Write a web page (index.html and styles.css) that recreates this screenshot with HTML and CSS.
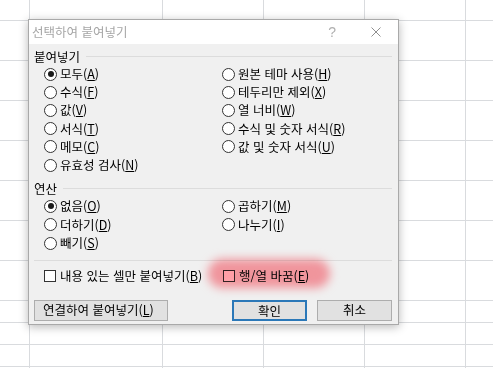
FILE: index.html
```html
<!DOCTYPE html>
<html lang="ko">
<head>
    <meta charset="UTF-8">
    <title>선택하여 붙여넣기</title>
    <link rel="stylesheet" href="styles.css">
</head>
<body>
    <div class="sheet">
        <div></div><div></div><div></div><div></div><div></div><div></div>
        <div></div><div></div><div></div><div></div><div></div><div></div>
        <div></div><div></div><div></div><div></div><div></div><div></div>
        <div></div><div></div><div></div><div></div><div></div><div></div>
        <div></div><div></div><div></div><div></div><div></div><div></div>
        <div></div><div></div><div></div><div></div><div></div><div></div>
        <div></div><div></div><div></div><div></div><div></div><div></div>
        <div></div><div></div><div></div><div></div><div></div><div></div>
        <div></div><div></div><div></div><div></div><div></div><div></div>
        <div></div><div></div><div></div><div></div><div></div><div></div>
        <div></div><div></div><div></div><div></div><div></div><div></div>
        <div></div><div></div><div></div><div></div><div></div><div></div>
    </div>

    <div class="dialog">
        <div class="titlebar">
            <span class="title">선택하여 붙여넣기</span>
            <span class="help">?</span>
            <svg class="close" viewBox="0 0 10 10"><path d="M0.5 0.5L9.5 9.5M9.5 0.5L0.5 9.5" stroke="#8f8f8f" stroke-width="1" fill="none"/></svg>
        </div>
        <div class="content">
            <div class="legend">붙여넣기</div>
            <div class="options paste">
                <label class="radio checked"><span class="dot"></span>모두(<u>A</u>)</label>
                <label class="radio"><span class="dot"></span>수식(<u>F</u>)</label>
                <label class="radio"><span class="dot"></span>값(<u>V</u>)</label>
                <label class="radio"><span class="dot"></span>서식(<u>T</u>)</label>
                <label class="radio"><span class="dot"></span>메모(<u>C</u>)</label>
                <label class="radio"><span class="dot"></span>유효성 검사(<u>N</u>)</label>
                <label class="radio"><span class="dot"></span>원본 테마 사용(<u>H</u>)</label>
                <label class="radio"><span class="dot"></span>테두리만 제외(<u>X</u>)</label>
                <label class="radio"><span class="dot"></span>열 너비(<u>W</u>)</label>
                <label class="radio"><span class="dot"></span>수식 및 숫자 서식(<u>R</u>)</label>
                <label class="radio"><span class="dot"></span>값 및 숫자 서식(<u>U</u>)</label>
            </div>

            <div class="legend">연산</div>
            <div class="options ops">
                <label class="radio checked"><span class="dot"></span>없음(<u>O</u>)</label>
                <label class="radio"><span class="dot"></span>더하기(<u>D</u>)</label>
                <label class="radio"><span class="dot"></span>빼기(<u>S</u>)</label>
                <label class="radio"><span class="dot"></span>곱하기(<u>M</u>)</label>
                <label class="radio"><span class="dot"></span>나누기(<u>I</u>)</label>
            </div>

            <div class="rule"></div>

            <div class="checks">
                <label class="check"><span class="box"></span>내용 있는 셀만 붙여넣기(<u>B</u>)</label>
                <label class="check"><span class="box"></span>행/열 바꿈(<u>E</u>)</label>
            </div>

            <div class="buttons">
                <button class="btn link">연결하여 붙여넣기(<u>L</u>)</button>
                <div class="actions">
                    <button class="btn default">확인</button>
                    <button class="btn">취소</button>
                </div>
            </div>
        </div>
        <div class="mark"></div>
    </div>
</body>
</html>
```

FILE: styles.css
```css
html, body {
    margin: 0;
    padding: 0;
    height: 100%;
    overflow: hidden;
    font-family: "Noto Sans CJK KR", "Malgun Gothic", sans-serif;
}
body {
    position: relative;
    background: #fff;
}

/* spreadsheet behind the dialog */
.sheet {
    display: grid;
    grid-template-columns: 29px 132px 100px 100px 100px 1fr;
    grid-template-rows: 20px repeat(7, 39px) repeat(3, 21px) 1fr;
    gap: 1px;
    height: 368px;
    background: #d9dbde;
}
.sheet div {
    background: #fff;
}

/* dialog */
.dialog {
    position: absolute;
    left: 28px;
    top: 19px;
    width: 371px;
    height: 306px;
    box-sizing: border-box;
    border: 1px solid #a9a9a9;
    background: #f0f0f0;
    box-shadow: 0 2px 9px rgba(0,0,0,0.28);
    display: flex;
    flex-direction: column;
}
.titlebar {
    height: 24px;
    background: #fff;
    display: flex;
    align-items: center;
    padding: 0 17px 0 3px;
    flex-shrink: 0;
}
.title {
    font-size: 12.5px;
    color: #a6a6a6;
    line-height: 24px;
}
.help {
    margin-left: auto;
    font-size: 14px;
    color: #b0b0b0;
    font-family: "Liberation Sans", sans-serif;
    margin-right: 35px;
    line-height: 24px;
}
.close {
    width: 10px;
    height: 10px;
}

.content {
    flex: 1;
    padding: 4px 6px 0 5px;
    font-size: 12.5px;
    color: #000;
}
.legend {
    display: flex;
    align-items: center;
    height: 17px;
    line-height: 17px;
}
.legend::after {
    content: "";
    flex: 1;
    height: 1px;
    background: #dcdcdc;
    margin-left: 6px;
}
.options {
    display: grid;
    grid-template-columns: 178px 1fr;
    grid-auto-flow: column;
    padding-left: 10px;
}
.paste {
    grid-template-rows: repeat(6, 18.2px);
}
.paste + .legend {
    margin-top: 6px;
}
.ops {
    grid-template-rows: repeat(3, 18.5px);
    margin-bottom: 7px;
}

.radio, .check {
    display: flex;
    align-items: center;
    white-space: nowrap;
    line-height: 18px;
}
.dot {
    width: 11px;
    height: 11px;
    border: 1px solid #333;
    border-radius: 50%;
    background: #fff;
    margin-right: 3px;
    position: relative;
    flex-shrink: 0;
}
.checked .dot::after {
    content: "";
    position: absolute;
    left: 2.5px;
    top: 2.5px;
    width: 6px;
    height: 6px;
    border-radius: 50%;
    background: #1a1a1a;
}
.rule {
    height: 1px;
    background: #dcdcdc;
}
.checks {
    display: grid;
    grid-template-columns: 179px 1fr;
    padding-left: 10px;
    margin-top: 6px;
    height: 18px;
}
.box {
    width: 10px;
    height: 10px;
    border: 1px solid #333;
    background: #fff;
    margin-right: 4px;
    flex-shrink: 0;
}

.buttons {
    display: flex;
    justify-content: space-between;
    margin-top: 15px;
}
.actions {
    display: flex;
    gap: 10px;
}
.btn {
    height: 21px;
    box-sizing: border-box;
    border: 1px solid #adadad;
    background: #e1e1e1;
    font-family: inherit;
    font-size: 12.5px;
    color: #000;
    padding: 0;
    line-height: 18px;
    width: 75px;
}
.btn.link {
    width: 134px;
    text-align: left;
    padding-left: 8px;
}
.btn.default {
    border: 2px solid #2b78b8;
}
u {
    text-decoration: underline;
    text-underline-offset: 1px;
}

/* pink marker over the transpose option */
.mark {
    position: absolute;
    left: 179px;
    top: 239px;
    width: 122px;
    height: 29px;
    border-radius: 15px;
    background: #ff9ea6;
    filter: blur(5px);
    mix-blend-mode: multiply;
}
```
